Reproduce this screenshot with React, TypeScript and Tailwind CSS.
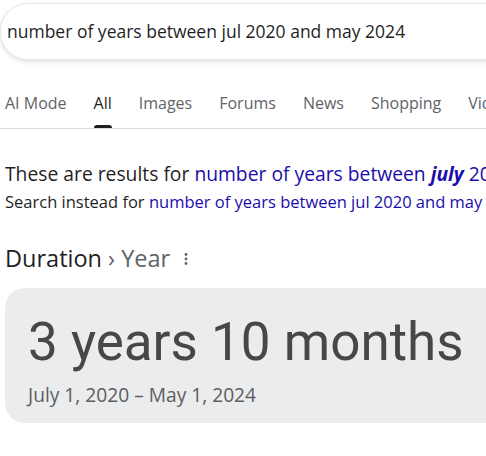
const tabs = ['AI Mode', 'All', 'Images', 'Forums', 'News', 'Shopping', 'Videos']

export default function App() {
  return (
    <div
      className="h-[456px] w-[486px] overflow-hidden bg-white text-[#1f1f1f]"
      style={{ fontFamily: '"Open Sans", Roboto, Arial, sans-serif' }}
    >
      {/* search box */}
      <div className="pt-[3px]">
        <div className="flex h-[57px] w-[560px] items-center rounded-[28px] border border-[#e6e6e6] bg-white pl-[6px] shadow-[0_2px_5px_rgba(0,0,0,0.12)]">
          <span className="text-[17.5px] text-[#1f1f1f]">number of years between jul 2020 and may 2024</span>
        </div>
      </div>

      {/* tabs */}
      <div className="mt-[31px] flex w-[560px] gap-[27px] whitespace-nowrap border-b border-[#dadce0] pl-[5px] text-[16px] text-[#5f6368]">
        {tabs.map((t) => (
          <div key={t} className={t === 'All' ? 'relative pb-[13px] font-medium text-[#1f1f1f]' : 'pb-[13px]'}>
            {t}
            {t === 'All' && <span className="absolute bottom-0 left-0 right-0 h-[3px] rounded-t-sm bg-[#1f1f1f]" />}
          </div>
        ))}
      </div>

      {/* spelling */}
      <div className="mt-[32px] whitespace-nowrap pl-[5px]">
        <p className="text-[19.3px] leading-[26px]">
          These are results for{' '}
          <span className="text-[#1a0dab]">
            number of years between <b className="italic">july</b> 2020 and may 2024
          </span>
        </p>
        <p className="mt-[4px] text-[16.5px] leading-[22px]">
          Search instead for <span className="text-[#1a0dab]">number of years between jul 2020 and may 2024</span>
        </p>
      </div>

      {/* duration header */}
      <div className="mt-[28px] flex items-center pl-[5px]">
        <span className="text-[23.5px] text-[#1f1f1f]">Duration</span>
        <span className="ml-[6px] text-[23.5px] text-[#5f6368]">› Year</span>
        <svg className="ml-[8px]" width="16" height="16" viewBox="0 0 16 16" fill="#5f6368">
          <circle cx="8" cy="3.5" r="1.4" />
          <circle cx="8" cy="8" r="1.4" />
          <circle cx="8" cy="12.5" r="1.4" />
        </svg>
      </div>

      {/* card */}
      <div className="ml-[5px] mt-[12px] h-[135px] w-[520px] rounded-[20px] bg-[#ebecee] pl-[23px] pt-[24px]">
        <div className="text-[53px] leading-[60px] text-[#474747]" style={{ fontFamily: 'Roboto, Arial, sans-serif' }}>
          3 years 10 months
        </div>
        <div className="mt-[9px] text-[19.2px] text-[#5e5e5e]">July 1, 2020 – May 1, 2024</div>
      </div>
    </div>
  )
}
